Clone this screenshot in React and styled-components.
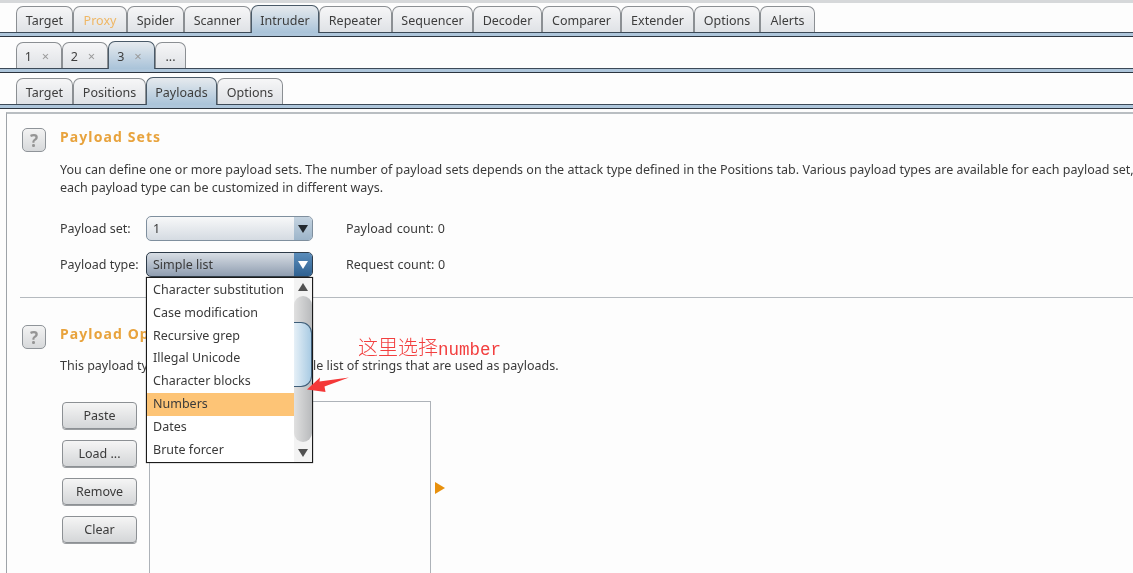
import styled, { createGlobalStyle } from 'styled-components';

const GlobalStyle = createGlobalStyle`
  html, body { margin: 0; padding: 0; background: #fdfdfd; }
  body { font-family: "Noto Sans", "Open Sans", sans-serif; font-size: 12.5px; color: #3a3a3a; }
`;

const Page = styled.div`
  width: 1133px;
  height: 573px;
  overflow: hidden;
  background: #fdfdfd;
  border-top: 3px solid #d6d8da;
  box-sizing: border-box;
  filter: blur(0.4px);
`;

const TabStrip = styled.div`
  display: flex;
  height: ${(p) => p.$height}px;
  align-items: flex-end;
  padding-left: 16px;
  margin-top: ${(p) => p.$top}px;
`;

const Tab = styled.div`
  box-sizing: border-box;
  width: ${(p) => p.$w}px;
  height: ${(p) => (p.$active ? 28 : 26)}px;
  margin-bottom: ${(p) => (p.$active ? -1 : 0)}px;
  padding: 1px ${(p) => p.$shift ?? 0}px 0 0;
  display: flex;
  align-items: center;
  justify-content: center;
  gap: 10px;
  font-size: 12.5px;
  color: ${(p) => (p.$orange ? '#efb765' : '#3d3d3d')};
  border: 1px solid ${(p) => (p.$active ? '#4a5a68' : '#8b8f93')};
  border-bottom: none;
  border-radius: 7px 7px 0 0;
  background: ${(p) =>
    p.$active
      ? 'linear-gradient(#e6eaee, #a9c3d9)'
      : 'linear-gradient(#f6f6f7, #dfe2e6)'};
`;

const Close = styled.span`
  color: #9a9a9a;
  font-size: 13px;
`;

const Band = styled.div`
  height: 3px;
  background: #aec6db;
  border-top: 1px solid #3c4a58;
  border-bottom: 1px solid #2c3540;
`;

const Panel = styled.div`
  margin: 3px 0 0 6px;
  height: 500px;
  border-left: 1px solid #9ea3a8;
  border-top: 2px solid #b9bec2;
  box-sizing: border-box;
  padding: 14px 0 0 15px;
`;

const Section = styled.section`
  position: relative;
  display: grid;
  grid-template-columns: 24px 1fr;
  column-gap: 14px;
  margin-top: ${(p) => p.$top ?? 0}px;
`;

const HelpButton = styled.div`
  width: 24px;
  height: 24px;
  box-sizing: border-box;
  border: 1px solid #8f9499;
  border-radius: 5px;
  background: linear-gradient(#f3f3f3, #d7d9db);
  color: #959595;
  font-size: 17px;
  font-weight: 700;
  display: flex;
  align-items: center;
  justify-content: center;
`;

const Heading = styled.h2`
  margin: 0;
  height: 20px;
  font-size: 14px;
  line-height: 18px;
  font-weight: 700;
  letter-spacing: 1.1px;
  color: #e8a33d;
`;

const Body = styled.div`
  min-width: 0;
`;

const Copy = styled.p`
  margin: ${(p) => p.$top}px 0 0;
  font-size: 12.5px;
  line-height: 18px;
  white-space: nowrap;
`;

const FormRow = styled.div`
  position: relative;
  display: flex;
  align-items: center;
  height: 25px;
  margin-top: ${(p) => p.$top}px;
`;

const Label = styled.span`
  width: 86px;
`;

const Select = styled.div`
  box-sizing: border-box;
  width: 167px;
  height: 25px;
  display: flex;
  align-items: center;
  justify-content: space-between;
  padding-left: 6px;
  overflow: hidden;
  border: 1px solid ${(p) => (p.$open ? '#2c3a48' : '#7f8f9e')};
  border-radius: 5px;
  background: ${(p) =>
    p.$open ? 'linear-gradient(#d7dde4, #8f9db0)' : 'linear-gradient(#f7f8f9, #d5dbe2)'};
`;

const SelectArrow = styled.div`
  width: 18px;
  height: 100%;
  display: flex;
  align-items: center;
  justify-content: center;
  background: ${(p) =>
    p.$open ? 'linear-gradient(#5b8dbb, #2f6191)' : 'linear-gradient(#c4d3e0, #9db5ca)'};
  svg { fill: ${(p) => (p.$open ? '#ffffff' : '#22282e')}; }
`;

const Count = styled.span`
  margin-left: 33px;
  word-spacing: ${(p) => p.$spacing ?? 1}px;
`;

const Popup = styled.div`
  position: absolute;
  z-index: 5;
  left: 86px;
  top: 25px;
  box-sizing: border-box;
  width: 167px;
  height: 186px;
  display: flex;
  background: #fff;
  border: 1px solid #1b1b1b;
  box-shadow: 0 0 1px #555;
`;

const PopupList = styled.div`
  flex: 1;
  padding-top: 1px;
`;

const PopupItem = styled.div`
  height: 22.8px;
  line-height: 22.8px;
  padding-left: 6px;
  background: ${(p) => (p.$selected ? '#fdc476' : 'transparent')};
`;

const Scrollbar = styled.div`
  position: relative;
  width: 18px;
  display: flex;
  flex-direction: column;
  justify-content: space-between;
  background: #f3f3f3;
`;

const ScrollTrack = styled.div`
  position: absolute;
  left: 0;
  right: 0;
  top: 18px;
  bottom: 20px;
  border-radius: 9px;
  background: linear-gradient(90deg, #e0e0e0, #b8babc);
`;

const ScrollCap = styled.div`
  position: relative;
  height: 18px;
  display: flex;
  align-items: center;
  justify-content: center;
  svg { fill: #505050; }
`;

const ScrollThumb = styled.div`
  position: absolute;
  left: 0;
  top: 44px;
  width: 18px;
  height: 65px;
  box-sizing: border-box;
  border: 1px solid #3d5d78;
  border-left: none;
  border-radius: 0 11px 11px 0;
  background: linear-gradient(90deg, #e6f0f7, #a9cbe3);
`;

const Divider = styled.hr`
  margin: 20px 0 0 -2px;
  border: none;
  border-top: 1px solid #b5babf;
`;

const EditorRow = styled.div`
  display: flex;
  margin-top: 26px;
`;

const Buttons = styled.div`
  display: flex;
  flex-direction: column;
  gap: 11px;
  margin: 1px 12px 0 2px;
`;

const Button = styled.div`
  box-sizing: border-box;
  width: 75px;
  height: 27px;
  display: flex;
  align-items: center;
  justify-content: center;
  border: 1px solid #8c9094;
  border-radius: 4px;
  background: linear-gradient(#f5f5f5, #d4d6d8);
  box-shadow: 0 1px 0 #9a9da0;
`;

const ListBox = styled.div`
  width: 282px;
  height: 200px;
  box-sizing: border-box;
  border: 1px solid #adb2b8;
`;

const ExpandMark = styled.svg`
  margin: 81px 0 0 4px;
  fill: #e8900c;
`;

const Note = styled.div`
  position: absolute;
  z-index: 6;
  left: 336px;
  top: 12px;
  display: flex;
  align-items: baseline;
  color: #f23f3f;
  font-size: 20px;
  line-height: 20px;
  font-weight: 300;
  font-family: "Noto Sans CJK SC", sans-serif;
`;

const NoteLatin = styled.span`
  font-family: "Liberation Mono", monospace;
  font-size: 17.5px;
`;

const NoteArrow = styled.svg`
  position: absolute;
  z-index: 7;
  left: 285px;
  top: 52px;
  fill: #f43838;
`;

const mainTabs = [
  ['Target', 57], ['Proxy', 54], ['Spider', 57], ['Scanner', 67], ['Intruder', 68],
  ['Repeater', 73], ['Sequencer', 81], ['Decoder', 69], ['Comparer', 79],
  ['Extender', 73], ['Options', 66], ['Alerts', 55],
];
const subTabs = [['Target', 57], ['Positions', 73], ['Payloads', 71], ['Options', 66]];
const popupItems = [
  'Character substitution', 'Case modification', 'Recursive grep', 'Illegal Unicode',
  'Character blocks', 'Numbers', 'Dates', 'Brute forcer',
];

const Caret = ({ up, size = 10 }) => (
  <svg width={size} height={size - 2} viewBox="0 0 10 8">
    <path d={up ? 'M5 0 10 8H0Z' : 'M0 0H10L5 8Z'} />
  </svg>
);

export default function App() {
  return (
    <Page>
      <GlobalStyle />
      <TabStrip $top={3} $height={26}>
        {mainTabs.map(([name, w]) => (
          <Tab key={name} $w={w} $active={name === 'Intruder'} $orange={name === 'Proxy'}>
            {name}
          </Tab>
        ))}
      </TabStrip>
      <Band />

      <TabStrip $top={5} $height={26}>
        <Tab $w={46} $shift={4}>1 <Close>×</Close></Tab>
        <Tab $w={46} $shift={4}>2 <Close>×</Close></Tab>
        <Tab $w={47} $shift={4} $active>3 <Close>×</Close></Tab>
        <Tab $w={31}>...</Tab>
      </TabStrip>
      <Band />

      <TabStrip $top={5} $height={26}>
        {subTabs.map(([name, w]) => (
          <Tab key={name} $w={w} $active={name === 'Payloads'}>{name}</Tab>
        ))}
      </TabStrip>
      <Band />

      <Panel>
        <Section>
          <HelpButton>?</HelpButton>
          <Body>
            <Heading>Payload Sets</Heading>
            <Copy $top={13}>
              You can define one or more payload sets. The number of payload sets depends on the
              attack type defined in the Positions tab. Various payload types are available for
              each payload set,
            </Copy>
            <Copy $top={0}>each payload type can be customized in different ways.</Copy>
            <FormRow $top={19}>
              <Label>Payload set:</Label>
              <Select>
                1
                <SelectArrow><Caret /></SelectArrow>
              </Select>
              <Count>Payload count: 0</Count>
            </FormRow>
            <FormRow $top={11}>
              <Label>Payload type:</Label>
              <Select $open>
                Simple list
                <SelectArrow $open><Caret /></SelectArrow>
              </Select>
              <Count $spacing={0.4}>Request count: 0</Count>
              <Popup>
                <PopupList>
                  {popupItems.map((item) => (
                    <PopupItem key={item} $selected={item === 'Numbers'}>{item}</PopupItem>
                  ))}
                </PopupList>
                <Scrollbar>
                  <ScrollTrack />
                  <ScrollCap><Caret up /></ScrollCap>
                  <ScrollThumb />
                  <ScrollCap><Caret /></ScrollCap>
                </Scrollbar>
              </Popup>
            </FormRow>
          </Body>
        </Section>

        <Divider />

        <Section $top={27}>
          <HelpButton>?</HelpButton>
          <Body>
            <Heading>Payload Options [Simple list]</Heading>
            <Copy $top={12}>
              This payload type lets you configure a simple list of strings that are used as payloads.
            </Copy>
            <EditorRow>
              <Buttons>
                <Button>Paste</Button>
                <Button>Load ...</Button>
                <Button>Remove</Button>
                <Button>Clear</Button>
              </Buttons>
              <ListBox />
              <ExpandMark width="10" height="12" viewBox="0 0 10 12">
                <path d="M0 0 10 6 0 12Z" />
              </ExpandMark>
            </EditorRow>
          </Body>
          <Note>这里选择<NoteLatin>number</NoteLatin></Note>
          <NoteArrow width="44" height="16" viewBox="0 0 44 16">
            <path d="M0 12.5 13 .5 12.5 4.5 42 .5 17.5 9.5 18.5 15Z" />
          </NoteArrow>
        </Section>
      </Panel>
    </Page>
  );
}
